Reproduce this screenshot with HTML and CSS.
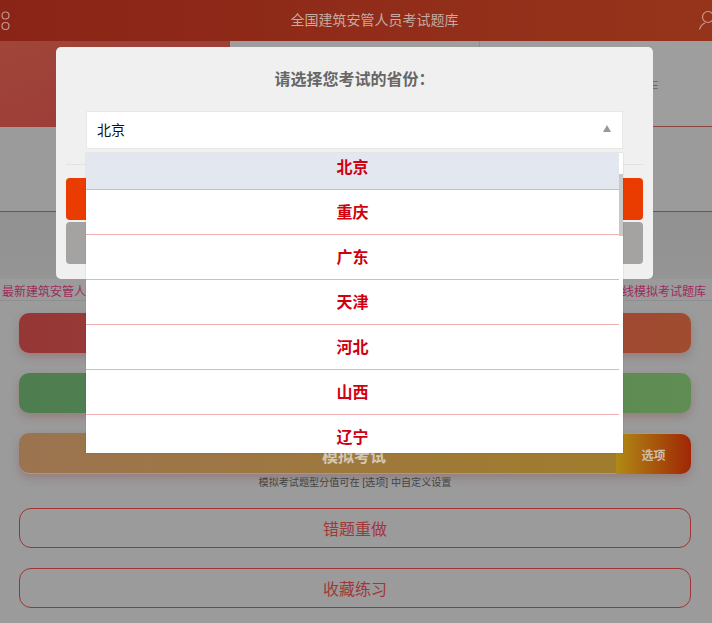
FILE: index.html
```html
<!DOCTYPE html>
<html lang="zh-CN">
<head>
<meta charset="utf-8">
<title>全国建筑安管人员考试题库</title>
<link rel="stylesheet" href="styles.css">
</head>
<body>
<div class="page">
  <header class="topbar">
    <svg class="topicon" width="12" height="24" viewBox="0 0 12 24"><circle cx="5.5" cy="7.5" r="3.5"/><circle cx="5.5" cy="18" r="3.5"/></svg>
    <h1 class="apptitle">全国建筑安管人员考试题库</h1>
    <svg class="topicon" width="13" height="24" viewBox="0 0 13 24"><circle cx="9" cy="9" r="5.5"/><path d="M0.5 21.5C1.5 18 3.5 16 6 15"/></svg>
  </header>
  <section class="tabs">
    <div class="tab tab-on"></div>
    <div class="tab tab-mid"></div>
    <div class="tab tab-end"><span class="tabglyph">E</span></div>
  </section>
  <section class="band"></section>
  <section class="shade"></section>
  <p class="notice"><span>最新建筑安管人员</span><span>线模拟考试题库</span></p>
  <section class="actions">
    <div class="btn btn-red"></div>
    <div class="btn btn-green"></div>
    <div class="examrow">
      <div class="btn btn-exam">模拟考试</div>
      <div class="btn btn-opt">选项</div>
    </div>
    <p class="hint">模拟考试题型分值可在 [选项] 中自定义设置</p>
    <div class="btn btn-line">错题重做</div>
    <div class="btn btn-line">收藏练习</div>
  </section>

  <div class="modal">
    <h2 class="modal-title">请选择您考试的省份：</h2>
    <div class="select"><span>北京</span><i class="caret"></i></div>
    <hr class="rule">
    <div class="mbtn mbtn-main"></div>
    <div class="mbtn mbtn-alt"></div>
    <div class="menu">
      <ul class="options">
        <li class="opt opt-on">北京</li>
        <li class="opt">重庆</li>
        <li class="opt">广东</li>
        <li class="opt">天津</li>
        <li class="opt">河北</li>
        <li class="opt">山西</li>
        <li class="opt">辽宁</li>
      </ul>
      <div class="thumb"></div>
    </div>
  </div>
</div>
</body>
</html>
```
FILE: styles.css
```css
* { box-sizing: border-box; }
html, body { margin: 0; padding: 0; }
body {
  font-family: "Liberation Sans", "Noto Sans CJK SC", sans-serif;
  background: #9b9b9b;
}
.page {
  position: relative;
  width: 712px;
  height: 623px;
  overflow: hidden;
  background: #9b9b9b;
}
.topbar {
  height: 41px;
  display: flex;
  align-items: center;
  justify-content: space-between;
  background: linear-gradient(90deg, #8a2417, #96341b);
}
.topicon { fill: none; stroke: #c8978c; stroke-width: 1.2; flex: none; }
.topbar .topicon:first-child { margin-top: -1px; }
.topbar .topicon:last-child { margin-top: -2px; }
.apptitle {
  margin: 0 0 0 38px;
  font-size: 14px;
  font-weight: 400;
  color: #c4aaa2;
  line-height: 41px;
}
.tabs {
  display: grid;
  grid-template-columns: 230px 250px 1fr;
  height: 86px;
}
.tab-on { background: linear-gradient(160deg, #a04538, #9c3a38); }
.tab-mid { background: #9e9e9e; border-right: 1px solid #8f8f8f; }
.tab-end { background: #9e9e9e; border-bottom: 1px solid #8a4540; padding: 37px 0 0 171px; }
.tabglyph { font-size: 11px; line-height: 14px; color: #666; display: block; }
.band { height: 85px; background: #9b9b9b; border-bottom: 1px solid #8a4a46; }
.shade { height: 67px; background: linear-gradient(180deg, #919191, #959595); }
.notice {
  margin: 0;
  height: 22px;
  padding: 5px 6px 0 2px;
  display: flex;
  justify-content: space-between;
  font-size: 12px;
  line-height: 16px;
  color: #9e2a5e;
  border-bottom: 1px solid #8f8f8f;
}
.actions {
  display: flex;
  flex-direction: column;
  padding: 12px 21px 0 19px;
}
.btn {
  height: 40px;
  display: flex;
  align-items: center;
  justify-content: center;
  flex: none;
}
.btn-red, .btn-green, .examrow { border-radius: 10px; box-shadow: 0 4px 8px rgba(130, 60, 60, .3); }
.btn-red { background: linear-gradient(90deg, #963737, #a04c30); }
.btn-green { margin-top: 20px; background: linear-gradient(90deg, #4e7d50, #608d52); }
.examrow { margin-top: 20px; display: flex; height: 41px; align-items: flex-end; }
.btn-exam {
  flex: 1;
  align-self: flex-start;
  padding: 4px 0 0 73px;
  font-size: 16px;
  font-weight: 700;
  color: #d4c8b4;
  border-radius: 10px 0 0 10px;
  background: linear-gradient(90deg, #9b7350, #a07d2d);
}
.btn-opt {
  width: 75px;
  font-size: 12px;
  font-weight: 700;
  color: #cdbdab;
  border-radius: 0 10px 10px 0;
  background: linear-gradient(90deg, #b08a14, #a02605);
}
.hint {
  margin: 0;
  height: 34px;
  padding-top: 1px;
  font-size: 10.1px;
  line-height: 16px;
  color: #444;
  text-align: center;
}
.btn-line {
  margin-bottom: 20px;
  font-size: 16px;
  color: #a03838;
  border: 1px solid #a03434;
  border-radius: 12px;
}
.modal {
  position: absolute;
  left: 56px;
  top: 47px;
  width: 597px;
  height: 232px;
  padding: 0 10px;
  border-radius: 5px;
  background: #f0f0f0;
}
.modal-title {
  margin: 0;
  height: 64px;
  padding-top: 22px;
  font-size: 16px;
  line-height: 22px;
  font-weight: 700;
  color: #666;
  text-align: center;
}
.select {
  margin: 0 20px;
  height: 38px;
  padding: 0 11px 2px 10px;
  display: flex;
  align-items: center;
  justify-content: space-between;
  font-size: 14px;
  color: #111;
  background: #fff;
  border: 1px solid #e8e8e8;
}
.caret {
  width: 0;
  height: 0;
  margin: -2px 0 0;
  border: 4px solid transparent;
  border-top: 0;
  border-bottom: 7px solid #999;
}
.rule { margin: 15px 0 13px; border: 0; border-top: 1px solid #e2e2e2; }
.mbtn { height: 42px; border-radius: 4px; }
.mbtn-main { background: #ea3c00; }
.mbtn-alt { margin-top: 2px; background: #a5a2a2; }
.menu {
  position: absolute;
  left: 30px;
  top: 106px;
  width: 537px;
  height: 300px;
  overflow: hidden;
  background: #fff;
  box-shadow: 0 0 1px rgba(0, 0, 0, .25);
}
.options {
  list-style: none;
  margin: -8px 4px 0 0;
  padding: 0;
}
.opt {
  height: 45px;
  padding-top: 1px;
  font-size: 16px;
  font-weight: 700;
  line-height: 44px;
  text-align: center;
  color: #d0000f;
  border-bottom: 1px solid #efb0b0;
}
.opt-on { background: #e3e8f0; }
.thumb {
  position: absolute;
  right: 0;
  top: 21px;
  width: 4px;
  height: 62px;
  background: #c9c9c9;
}
```
